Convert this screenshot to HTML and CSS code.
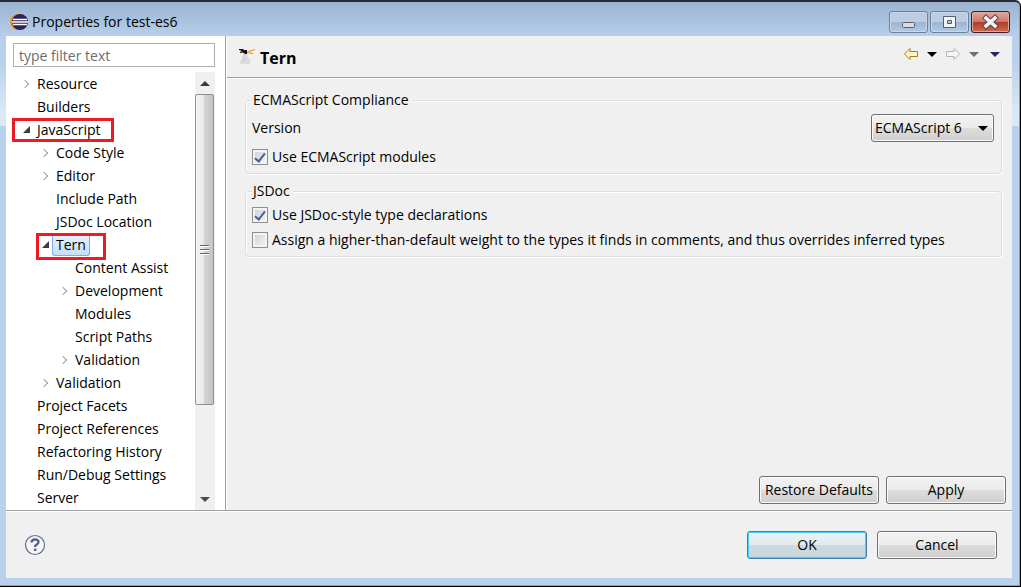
FILE: index.html
```html
<!DOCTYPE html>
<html lang="en">
<head>
    <meta charset="UTF-8">
    <meta name="viewport" content="width=device-width, initial-scale=1.0">
    <title>Properties for test-es6</title>
    <link rel="stylesheet" href="styles.css">
</head>
<body>
    <div class="window">
        <header class="titlebar">
            <svg class="app-icon" width="18" height="18" viewBox="0 0 18 18">
                <circle cx="8" cy="9" r="8" fill="#f7941e"/>
                <circle cx="10" cy="9" r="8" fill="#2c2255"/>
                <path d="M3 6.5h14M2 9h16M3 11.5h14" stroke="#fff" stroke-width="1.4"/>
            </svg>
            <h1>Properties for test-es6</h1>
            <button class="win-btn" aria-label="Minimize">
                <svg width="37" height="20" viewBox="0 0 37 20"><rect x="12.5" y="10.5" width="12" height="5" rx="1" fill="#dcdcdc" stroke="#53616f"/></svg>
            </button>
            <button class="win-btn" aria-label="Maximize">
                <svg width="37" height="20" viewBox="0 0 37 20"><path d="M12.500 4.500h12v11h-12zM16.500 8.500h4v3h-4z" fill="#f4f4f4" fill-rule="evenodd" stroke="#53616f"/></svg>
            </button>
            <button class="win-btn close" aria-label="Close">
                <svg width="37" height="20" viewBox="0 0 37 20">
                    <path d="M14 6l9 8M23 6l-9 8" stroke="#5a4448" stroke-width="5.6" stroke-linecap="square"/>
                    <path d="M14 6l9 8M23 6l-9 8" stroke="#f4f4f4" stroke-width="3.6" stroke-linecap="square"/>
                </svg>
            </button>
        </header>

        <div class="client">
            <div class="main">
                <aside class="sidebar">
                    <input type="text" class="filter" placeholder="type filter text" aria-label="type filter text">
                    <div class="tree-box">
                        <ul class="tree">
                            <li><span class="closed">Resource</span></li>
                            <li><span>Builders</span></li>
                            <li><span class="open mark mark-js">JavaScript</span>
                                <ul>
                                    <li><span class="closed">Code Style</span></li>
                                    <li><span class="closed">Editor</span></li>
                                    <li><span>Include Path</span></li>
                                    <li><span>JSDoc Location</span></li>
                                    <li><span class="open mark mark-tern selected">Tern</span>
                                        <ul>
                                            <li><span>Content Assist</span></li>
                                            <li><span class="closed">Development</span></li>
                                            <li><span>Modules</span></li>
                                            <li><span>Script Paths</span></li>
                                            <li><span class="closed">Validation</span></li>
                                        </ul>
                                    </li>
                                    <li><span class="closed">Validation</span></li>
                                </ul>
                            </li>
                            <li><span>Project Facets</span></li>
                            <li><span>Project References</span></li>
                            <li><span>Refactoring History</span></li>
                            <li><span>Run/Debug Settings</span></li>
                            <li><span>Server</span></li>
                        </ul>
                        <div class="scrollbar">
                            <button class="scroll-btn up" aria-label="Scroll up"></button>
                            <div class="track"><div class="thumb"></div></div>
                            <button class="scroll-btn down" aria-label="Scroll down"></button>
                        </div>
                    </div>
                </aside>

                <section class="page">
                    <div class="page-head">
                        <svg class="tern-icon" width="18" height="18" viewBox="0 0 18 18">
                            <path d="M5 5h4l1 4 2 3v4H3l-2-1 2-3 2-3z" fill="#dcdcdc"/>
                            <path d="M4 10l3-3M4 14l4-4" stroke="#c4c4c4"/>
                            <path d="M1 1h4l1 1h3v4H7L5 4.500 2 5V4l2-1-3-1z" fill="#111"/>
                            <path d="M9 4l3-1 5-1.500M9 4.500l6 .8" fill="none" stroke="#f6921e" stroke-width="1.3"/>
                        </svg>
                        <h2>Tern</h2>
                        <nav class="history">
                            <button class="nav-btn" aria-label="Back">
                                <svg width="16" height="14" viewBox="0 0 16 14"><path d="M1.500 7l5.500-5.500V4.500h7.500v5H7v3z" fill="#fff6cf" stroke="#b97c14"/></svg>
                            </button>
                            <button class="nav-btn arrow" aria-label="Back history"></button>
                            <button class="nav-btn" aria-label="Forward">
                                <svg width="16" height="14" viewBox="0 0 16 14"><path d="M14.500 7L9 1.500V4.500H1.500v5H9v3z" fill="#f6f6f6" stroke="#b4b4b4"/></svg>
                            </button>
                            <button class="nav-btn arrow off" aria-label="Forward history"></button>
                            <button class="nav-btn arrow menu" aria-label="Menu"></button>
                        </nav>
                    </div>

                    <form class="settings">
                        <fieldset>
                            <legend>ECMAScript Compliance</legend>
                            <div class="field">
                                <label for="version">Version</label>
                                <div class="select">
                                    <select id="version">
                                        <option>ECMAScript 6</option>
                                    </select>
                                </div>
                            </div>
                            <label class="check"><input type="checkbox" checked>Use ECMAScript modules</label>
                        </fieldset>
                        <fieldset>
                            <legend>JSDoc</legend>
                            <label class="check"><input type="checkbox" checked>Use JSDoc-style type declarations</label>
                            <label class="check"><input type="checkbox">Assign a higher-than-default weight to the types it finds in comments, and thus overrides inferred types</label>
                        </fieldset>
                    </form>

                    <div class="page-actions">
                        <button class="btn">Restore Defaults</button>
                        <button class="btn">Apply</button>
                    </div>
                </section>
            </div>

            <footer class="footer">
                <button class="help" aria-label="Help">
                    <svg width="22" height="22" viewBox="0 0 22 22">
                        <circle cx="11" cy="11" r="9.5" fill="#f6f6f8" stroke="#64708c" stroke-width="1.2"/>
                        <path d="M7.500 8.500c0-4 7-4 7-.5 0 2.500-3.500 2.500-3.500 5" fill="none" stroke="#566487" stroke-width="2.4"/>
                        <rect x="10" y="14.6" width="2.4" height="2.4" fill="#566487"/>
                    </svg>
                </button>
                <button class="btn default">OK</button>
                <button class="btn">Cancel</button>
            </footer>
        </div>
    </div>
</body>
</html>
```

FILE: styles.css
```css
*, *::before, *::after {
    box-sizing: border-box;
}
body {
    margin: 0;
    height: 100vh;
    padding-bottom: 1px;
    background-color: #fff;
    font-family: "Open Sans", "Noto Sans", sans-serif;
    font-size: 14px;
    line-height: 20px;
    color: #000;
}
button, input, select {
    font: inherit;
    color: inherit;
}
button {
    padding: 0;
}
.window {
    display: flex;
    flex-direction: column;
    height: 100%;
    padding: 0 8px 8px 6px;
    border-top: 2px solid #2b2b33;
    border-right: 1px solid #000;
    border-bottom: 1px solid #000;
    border-radius: 0 6px 0 0;
    box-shadow: inset -1px -1px 0 #2fc6e4;
    background: linear-gradient(#9ab3d0, #b7cfe9 34px, #b9d1ea 60px, #dbe8f5 110px, #dbe8f5 124px, #b9d1ea 124px);
}

/* title bar */
.titlebar {
    display: flex;
    align-items: center;
    gap: 2px;
    height: 34px;
    flex: none;
    padding: 6px 2px 0 4px;
}
.titlebar h1 {
    flex: 1;
    margin: 0 0 0 2px;
    font-size: 14px;
    font-weight: normal;
}
.win-btn {
    width: 39px;
    height: 22px;
    border: 1px solid #6b819c;
    border-radius: 3px;
    background: linear-gradient(#bccde2 50%, #9bb4d0 50%, #b4cae3);
    box-shadow: inset 0 0 0 1px #c9d9eb;
}
.win-btn svg {
    display: block;
}
.win-btn.close {
    border-color: #4a1820;
    background: linear-gradient(#dfa79d, #cd7667 50%, #b23a25 50%, #cc6c50);
    box-shadow: inset 0 0 0 1px #dfa9a0;
}

.client {
    flex: 1;
    display: flex;
    flex-direction: column;
    min-height: 0;
    background-color: #f0f0f0;
}
.main {
    flex: 1;
    display: flex;
    min-height: 0;
    border-bottom: 1px solid #a0a0a0;
}

/* tree */
.sidebar {
    display: flex;
    flex-direction: column;
    width: 220px;
    flex: none;
    padding: 7px 10px 0 7px;
    background-color: #fff;
    border-right: 1px solid #a0a0a0;
}
.filter {
    height: 24px;
    width: 100%;
    flex: none;
    padding: 0 5px;
    border: 1px solid #abadb3;
    background-color: #fff;
}
.filter::placeholder {
    color: #6d6d6d;
}
.tree-box {
    flex: 1;
    display: flex;
    min-height: 0;
    margin-top: 5px;
}
.tree {
    flex: 1;
    overflow: hidden;
}
.tree, .tree ul {
    margin: 0;
    padding: 0;
    list-style: none;
}
/* room for the outline that starts left of the tree */
.tree {
    margin-left: -1px;
    padding-left: 1px;
}
.tree ul {
    padding-left: 19px;
}
.tree > li {
    padding-left: 20px;
}
.tree span {
    position: relative;
    display: block;
    width: max-content;
    height: 23px;
    padding: 0 4px;
    line-height: 23px;
}
.closed::before {
    content: "";
    position: absolute;
    left: -11px;
    top: 9px;
    width: 6px;
    height: 6px;
    border: solid #a0a0a0;
    border-width: 1px 1px 0 0;
    transform: rotate(45deg);
}
.open::before {
    content: "";
    position: absolute;
    left: -10px;
    top: 8px;
    border: solid transparent;
    border-width: 0 0 7px 7px;
    border-bottom-color: #3c3c3c;
}
.tree .selected {
    background: linear-gradient(#e9f3fd, #c4defa);
    box-shadow: inset 0 0 0 1px #84acdd;
    border-radius: 3px;
}
.mark::after {
    content: "";
    position: absolute;
    border: 3px solid #ed1c24;
}
.mark-js::after {
    left: -21px;
    top: 0;
    width: 102px;
    height: 24px;
}
.mark-tern::after {
    left: -16px;
    top: 0;
    width: 70px;
    height: 27px;
    z-index: 1;
}

/* scrollbar */
.scrollbar {
    display: flex;
    flex-direction: column;
    width: 20px;
    flex: none;
    background-color: #f0f0f0;
}
.scroll-btn {
    display: flex;
    align-items: center;
    justify-content: center;
    height: 22px;
    border: none;
    background: none;
}
.scroll-btn::before {
    content: "";
    border: solid transparent;
}
.up::before {
    border-width: 0 5px 5px;
    border-bottom-color: #3a3a3a;
}
.down::before {
    border-width: 5px 5px 0;
    border-top-color: #4a4a4a;
}
.track {
    flex: 1;
}
.thumb {
    display: flex;
    align-items: center;
    justify-content: center;
    width: 19px;
    height: 79%;
    border: 1px solid #8f8f8f;
    border-radius: 2px;
    background: linear-gradient(90deg, #f5f5f5, #e8e8ea 45%, #d2d3d6 50%, #c3c5c9);
}
.thumb::before {
    content: "";
    width: 9px;
    height: 10px;
    background: repeating-linear-gradient(#666 0 1px, #fff 1px 2px, transparent 2px 4px);
}

/* property page */
.page {
    flex: 1;
    display: flex;
    flex-direction: column;
    min-width: 0;
    border-left: 1px solid #fff;
}
.page-head {
    display: flex;
    align-items: center;
    height: 42px;
    flex: none;
    padding: 0 9px 0 11px;
    border-bottom: 1px solid #a0a0a0;
    box-shadow: 0 1px 0 #fff;
}
.page-head h2 {
    flex: 1;
    margin: 2px 0 0 4px;
    font-size: 16px;
    font-weight: bold;
}
.history {
    display: flex;
    align-items: center;
    gap: 5px;
    margin-bottom: 5px;
}
.nav-btn {
    border: none;
    background: none;
}
.nav-btn svg {
    display: block;
}
.arrow {
    width: 16px;
    height: 14px;
    display: flex;
    align-items: center;
    justify-content: center;
}
.arrow::before {
    content: "";
    border: solid transparent;
    border-width: 5px 5px 0;
    border-top-color: #000;
}
.arrow.off::before {
    border-top-color: #6e6e76;
}
.arrow.menu::before {
    border-top-color: #36205c;
}
.settings {
    flex: 1;
    padding: 12px 10px 0 18px;
}
fieldset {
    margin: 0 0 7px;
    padding: 4px 7px 6px 6px;
    border: 1px solid #d5dfe5;
    border-radius: 4px;
    box-shadow: 1px 1px 0 #fff, inset 1px 1px 0 #fff;
}
legend {
    padding: 0 3px 0 1px;
    background-color: #f0f0f0;
}
.field {
    display: flex;
    justify-content: space-between;
    align-items: center;
}
.check {
    display: flex;
    align-items: center;
    gap: 4px;
}
.check + .check, .field + .check {
    margin-top: 5px;
}
.check input {
    appearance: none;
    display: grid;
    place-items: center;
    width: 16px;
    height: 16px;
    flex: none;
    margin: 0;
    border: 1px solid #8e8f8f;
    background: linear-gradient(135deg, #cbcfd5, #f6f6f6);
    box-shadow: inset 0 0 0 2px #f4f4f4;
}
.check input:checked::before {
    content: "";
    width: 6px;
    height: 11px;
    margin-bottom: 2px;
    border: solid #4a5f97;
    border-width: 0 2px 2px 0;
    transform: rotate(38deg);
}
.select {
    position: relative;
}
.select::after {
    content: "";
    position: absolute;
    right: 6px;
    top: 12px;
    border: solid transparent;
    border-width: 5px 5px 0;
    border-top-color: #000;
    pointer-events: none;
}
.select select {
    appearance: none;
    display: block;
    width: 123px;
    padding: 0 3px;
}
.btn, .select select {
    height: 28px;
    border: 1px solid #707070;
    border-radius: 3px;
    background: linear-gradient(#f2f2f2, #ebebeb 50%, #dddddd 50%, #cfcfcf);
    box-shadow: inset 0 0 0 1px #fafafa;
}
.btn {
    width: 120px;
}
.page-actions {
    display: flex;
    justify-content: flex-end;
    gap: 7px;
    padding: 0 6px 6px;
}

.footer {
    display: flex;
    align-items: center;
    gap: 10px;
    height: 67px;
    flex: none;
    padding: 0 15px 0 18px;
    border-top: 1px solid #fff;
}
.help {
    margin-right: auto;
    border: none;
    background: none;
}
.help svg {
    display: block;
}
.btn.default {
    border-color: #3c7fb1;
    background: linear-gradient(#edf3f5, #e2e9ec 50%, #cddadf 50%, #c8d6dc);
    box-shadow: inset 0 0 0 1px #46d0f5;
}
```
